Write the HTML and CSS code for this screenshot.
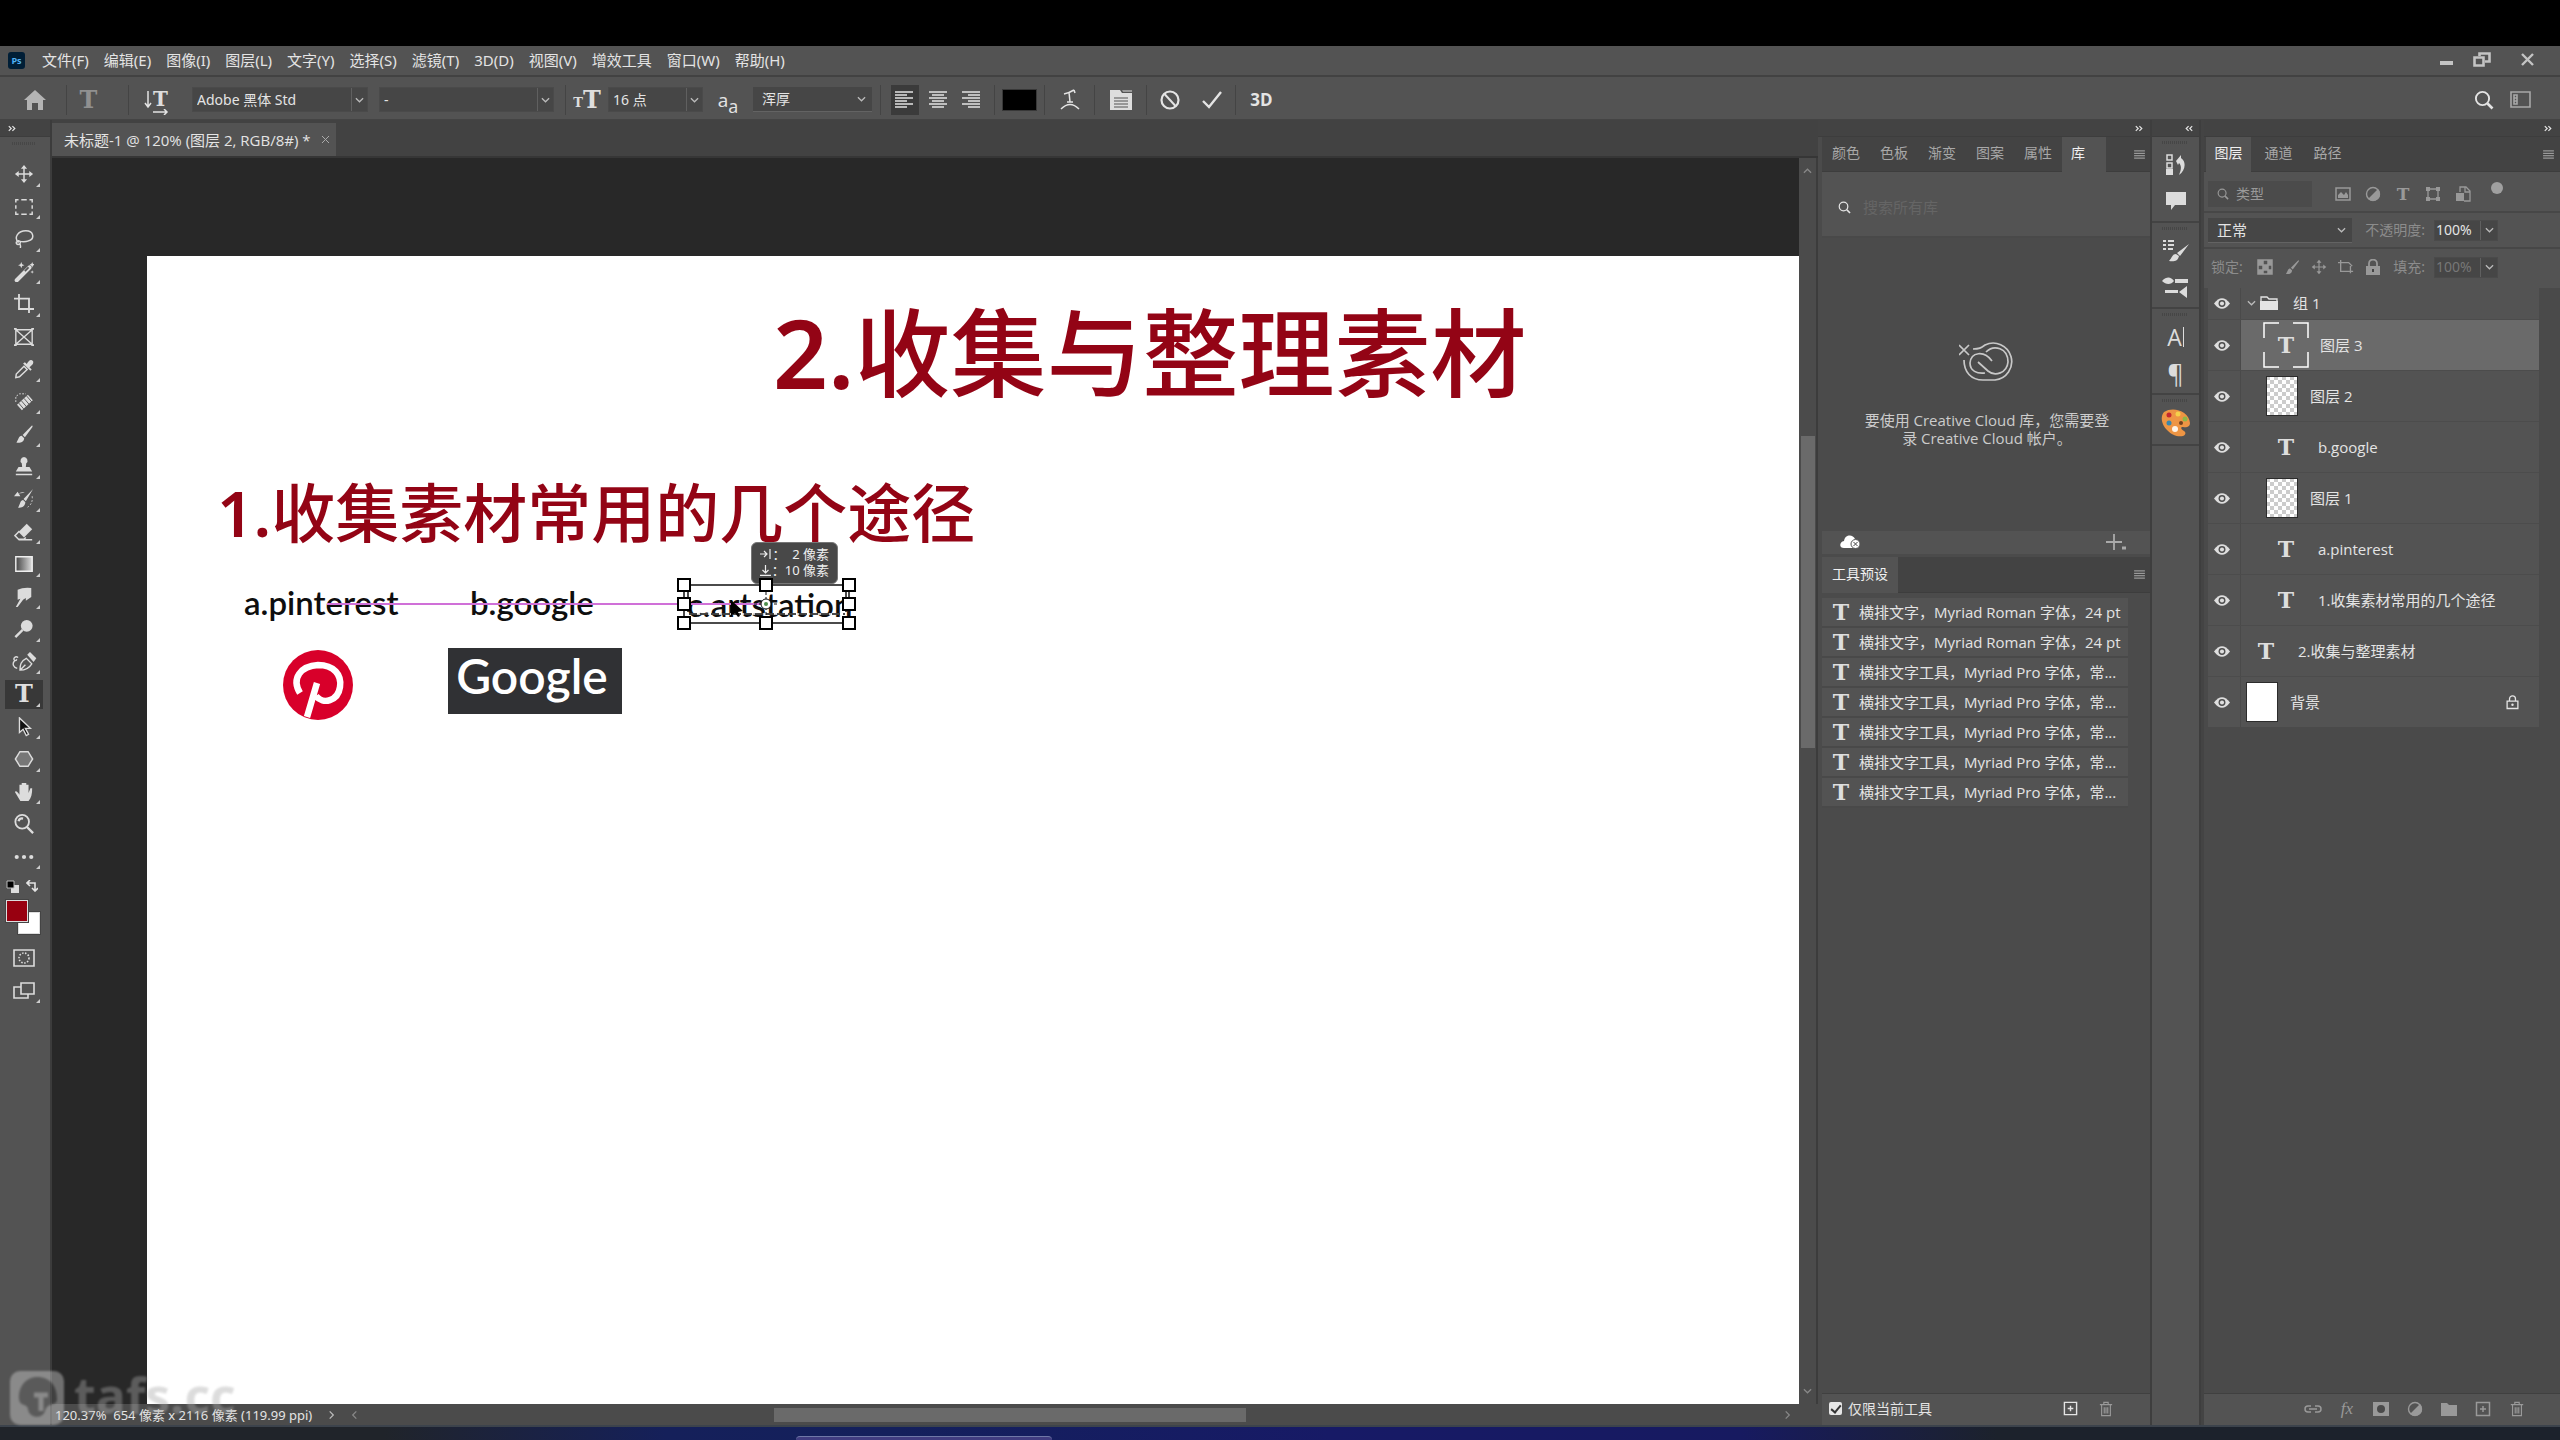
FILE: index.html
```html
<!DOCTYPE html>
<html lang="zh-CN">
<head>
<meta charset="utf-8">
<title>未标题-1 @ 120%</title>
<link rel="stylesheet" href="styles.css">
</head>
<body>
<svg class="defs" aria-hidden="true">
  <symbol id="chev" viewBox="0 0 10 6"><path d="M1 1l4 4 4-4" fill="none" stroke="currentColor" stroke-width="1.4"/></symbol>
  <symbol id="menu" viewBox="0 0 12 10"><path d="M0 1h12M0 3.7h12M0 6.4h12M0 9h12" stroke="currentColor"/></symbol>
  <symbol id="search" viewBox="0 0 20 20"><path d="M13.5 13.5l5 5" stroke="currentColor" stroke-width="2.6"/><circle cx="8.5" cy="8.5" r="6.6" fill="none" stroke="currentColor" stroke-width="1.9"/></symbol>
  <symbol id="move" viewBox="0 0 22 22"><path d="M11 4v14M4 11h14" stroke="currentColor" stroke-width="1.6"/><path d="M11 1l3.4 4.2H7.600zM11 21l3.400-4.200H7.600zM1 11l4.200-3.400v6.800zM21 11l-4.200-3.400v6.800z" fill="currentColor"/></symbol>
  <symbol id="brush" viewBox="0 0 22 22"><path d="M20 1.500L9.500 12l2.500 2.500L20.500 3z" fill="currentColor"/><path d="M8.500 13c-3 0-3 3-5.800 7.500 4 .5 8 0 8.500-4.800z" fill="currentColor"/></symbol>
  <symbol id="eye" viewBox="0 0 18 12"><path d="M0 6q9-12 18 0q-9 12-18 0z" fill="currentColor"/><circle cx="9" cy="6" r="3.900" fill="#4d4d4d"/><circle cx="9" cy="6" r="2.300" fill="currentColor"/></symbol>
  <symbol id="trash" viewBox="0 0 16 18"><path d="M1 4h14M5.500 4V1.500h5V4M3 4v12.500h10V4M6 7v7M8 7v7M10 7v7" fill="none" stroke="currentColor" stroke-width="1.300"/></symbol>
  <symbol id="plusbox" viewBox="0 0 16 16"><path d="M1.500 1.500h13v13h-13zM8 5v6M5 8h6" fill="none" stroke="currentColor" stroke-width="1.500"/></symbol>
  <symbol id="half" viewBox="0 0 16 16"><circle cx="8" cy="8" r="6.500" fill="none" stroke="currentColor" stroke-width="1.400"/><path d="M13 3A7 7 0 0 1 3 13z" fill="currentColor"/></symbol>
  <symbol id="lock" viewBox="0 0 14 16"><path d="M1.200 7h11.600v8H1.200zM3.800 7V4.500a3.200 3.200 0 0 1 6.400 0V7" fill="none" stroke="currentColor" stroke-width="1.400"/><circle cx="7" cy="11" r="1.300" fill="currentColor"/></symbol>
  <symbol id="dbl" viewBox="0 0 10 8"><path d="M1 1l3 3-3 3M5.500 1l3 3-3 3" fill="none" stroke="currentColor" stroke-width="1.500"/></symbol>
  <pattern id="checks" width="8" height="8" patternUnits="userSpaceOnUse"><path d="M0 0h8v8H0z" fill="#fff"/><path d="M0 0h4v4H0zM4 4h4v4H4z" fill="#ccc"/></pattern>
  <symbol id="clear" viewBox="0 0 32 40"><path d="M0 0h32v40H0z" fill="#2c2c2c"/><path d="M1 1h30v38H1z" fill="url(#checks)"/></symbol>
</svg>

<div class="app">
  <div class="topgap"></div>

  <header class="menubar">
    <span class="ps">Ps</span>
    <nav class="menus">
      <button>文件(F)</button><button>编辑(E)</button><button>图像(I)</button><button>图层(L)</button><button>文字(Y)</button><button>选择(S)</button><button>滤镜(T)</button><button>3D(D)</button><button>视图(V)</button><button>增效工具</button><button>窗口(W)</button><button>帮助(H)</button>
    </nav>
    <div class="winbtns">
      <button aria-label="最小化"><svg width="14" height="18" viewBox="0 0 14 18"><path d="M0 10h13v4H0z" fill="currentColor"/></svg></button>
      <button aria-label="还原"><svg width="18" height="16" viewBox="0 0 18 16"><path d="M6.500 4V1.500h10v8H12M1.500 5.500h9v8h-9z" fill="none" stroke="currentColor" stroke-width="2.600"/></svg></button>
      <button aria-label="关闭"><svg width="13" height="13" viewBox="0 0 13 13"><path d="M1 1l11 11M12 1L1 12" stroke="currentColor" stroke-width="2.400"/></svg></button>
    </div>
  </header>

  <div class="options">
    <button class="cell w66" aria-label="主页"><svg width="22" height="20" viewBox="0 0 22 20"><path d="M11 0l11 10h-3v10h-5v-7H8v7H3V10H0z" fill="#b4b4b4"/></svg></button>
    <span class="cell bar w62"><span class="T dim big">T</span></span>
    <button class="cell bar w56" aria-label="切换文本取向"><svg width="8" height="20" viewBox="0 0 8 20"><path d="M4 1v15M1 13l3 4 3-4" fill="none" stroke="currentColor" stroke-width="1.500"/></svg><span class="under"><span class="T">T</span><svg width="16" height="6" viewBox="0 0 16 6"><path d="M0 3h14M11 0l3 3-3 3" fill="none" stroke="currentColor" stroke-width="1.500"/></svg></span></button>
    <div class="combo w176"><input aria-label="字体" value="Adobe 黑体 Std"><button aria-label="选择字体"><svg class="chev"><use href="#chev"/></svg></button></div>
    <div class="combo w175 ml"><input aria-label="字体样式" value="-"><button aria-label="选择样式"><svg class="chev"><use href="#chev"/></svg></button></div>
    <span class="cell bar w43 ml"><span class="T sm">T</span><span class="T big">T</span></span>
    <div class="combo w95"><input aria-label="字号" value="16 点"><button aria-label="选择字号"><svg class="chev"><use href="#chev"/></svg></button></div>
    <span class="cell w50 aa">a<sub>a</sub></span>
    <div class="drop w119"><select aria-label="消除锯齿"><option>浑厚</option></select><svg class="chev"><use href="#chev"/></svg></div>
    <div class="cell bar w114 aligns">
      <button class="on" aria-label="左对齐"><svg width="20" height="18" viewBox="0 0 20 18"><path d="M0 1h18M0 4h12M0 7h18M0 10h12M0 13h18M0 16h12" stroke="currentColor" stroke-width="1.600"/></svg></button>
      <button aria-label="居中"><svg width="20" height="18" viewBox="0 0 20 18"><path d="M1 1h18M4 4h12M1 7h18M4 10h12M1 13h18M4 16h12" stroke="currentColor" stroke-width="1.600"/></svg></button>
      <button aria-label="右对齐"><svg width="20" height="18" viewBox="0 0 20 18"><path d="M1 1h18M7 4h12M1 7h18M7 10h12M1 13h18M7 16h12" stroke="currentColor" stroke-width="1.600"/></svg></button>
    </div>
    <button class="cell bar w50" aria-label="文本颜色"><span class="black"></span></button>
    <button class="cell bar w50" aria-label="变形文字"><svg width="22" height="22" viewBox="0 0 22 22"><path d="M5 5q5-1 10-4M10 3l1 10M8 13h6M2 20q9-9 18 0M15 1l1 3" fill="none" stroke="currentColor" stroke-width="1.500"/></svg></button>
    <button class="cell bar w52" aria-label="字符面板"><svg width="22" height="22" viewBox="0 0 22 22"><path d="M0 1h10l2 3h10v17H0z" fill="#ddd"/><path d="M12 1h10v2H13z" fill="#999"/><path d="M4 9h14M4 12h14M4 15h14M4 18h14" stroke="#555" stroke-width="1.200"/></svg></button>
    <div class="cell bar w89 pair">
      <button aria-label="取消"><svg width="20" height="20" viewBox="0 0 20 20"><path d="M4.500 4l11 12" stroke="currentColor" stroke-width="2"/><circle cx="10" cy="10" r="8.500" fill="none" stroke="currentColor" stroke-width="2.200"/></svg></button>
      <button aria-label="提交"><svg width="20" height="18" viewBox="0 0 20 18"><path d="M1 10l6 6L19 1" fill="none" stroke="currentColor" stroke-width="2.400"/></svg></button>
    </div>
    <button class="cell bar w56 d3">3D</button>
    <div class="optright">
      <button aria-label="搜索"><svg width="20" height="20"><use href="#search"/></svg></button>
      <button aria-label="工作区"><svg width="21" height="17" viewBox="0 0 21 17"><path d="M1 1h19v15H1zM4 4h3v9H4zM4 7h3M4 10h3" fill="none" stroke="#a8a8a8" stroke-width="1.600"/></svg></button>
    </div>
  </div>

  <main class="work">
    <aside class="tools">
      <div class="strip"><svg class="dbl"><use href="#dbl"/></svg></div>
      <div class="grip"></div>
      <div class="toollist">
        <button class="more" aria-label="移动"><svg><use href="#move"/></svg></button>
        <button class="more" aria-label="矩形选框"><svg viewBox="0 0 22 22"><path d="M2 6V3h3M8 3h6M17 3h3v3M20 9v4M20 16v3h-3M14 19H8M5 19H2v-3M2 13V9" fill="none" stroke="currentColor" stroke-width="1.600"/></svg></button>
        <button class="more" aria-label="套索"><svg viewBox="0 0 22 22"><path d="M5 15C-1 9 5 2 13 2c9 0 10 9 3 11-4 1.500-8 1-11 0-3-.5-3.500 4-.5 4 3.500 0 3-4.500 0-4M6 16c2 2 1 4 1 5" fill="none" stroke="currentColor" stroke-width="1.600"/></svg></button>
        <button class="more" aria-label="魔棒"><svg viewBox="0 0 22 22"><path d="M3 20L17 6" stroke="currentColor" stroke-width="4.500" stroke-linecap="round"/><path d="M12 10l4-4" stroke="#535353" stroke-width="2"/><path d="M8 0l1 2.500L11.500 3.500 9 4.500 8 7 7 4.500 4.500 3.500 7 2.500zM20 0l.8 2 2 1-2 1-.8 2-.8-2-2-1 2-1zM20 9l.5 1.500 1.500.5-1.500.5-.5 1.500-.5-1.500-1.500-.5 1.500-.5z" fill="currentColor"/></svg></button>
        <button class="more" aria-label="裁剪"><svg viewBox="0 0 22 22"><path d="M0 5h16.500v16M5.500 0v16.500H22" fill="none" stroke="currentColor" stroke-width="2"/></svg></button>
        <button aria-label="图框"><svg viewBox="0 0 22 22"><path d="M2 3h18v16H2zM2 3l18 16M20 3L2 19" fill="none" stroke="currentColor" stroke-width="1.500"/><path d="M0 2h3M19 2h3M0 20h3M19 20h3" stroke="currentColor" stroke-width="2"/></svg></button>
        <button class="more" aria-label="吸管"><svg viewBox="0 0 22 22"><path d="M11 8l3.500 3.500L6 19.500l-4 1 .5-4z" fill="none" stroke="currentColor" stroke-width="1.600"/><path d="M10 5l8 8 1.500-1.500L17 9c2-2 5-3 4-6.500C18.500-.5 16 2 14 5.500L12 3.500z" fill="currentColor"/></svg></button>
        <button class="more" aria-label="修复画笔"><svg viewBox="0 0 22 22"><path d="M2 11V5l4-3h7" fill="none" stroke="currentColor" stroke-width="1" stroke-dasharray="2 1.500"/><path d="M6 17L18 6" stroke="currentColor" stroke-width="8"/><path d="M5 12l6 7M8 9.500l6 7M11 7l6 7M14 4.500l6 7" stroke="#535353" stroke-width="1"/></svg></button>
        <button class="more" aria-label="画笔"><svg><use href="#brush"/></svg></button>
        <button class="more" aria-label="仿制图章"><svg viewBox="0 0 22 22"><path d="M11 0a4 4 0 0 1 2.500 7L13 11h4l3 5H2l3-5h4L8.500 7A4 4 0 0 1 11 0zM2 18.500h18V20H2z" fill="currentColor"/></svg></button>
        <button class="more" aria-label="历史记录画笔"><svg viewBox="0 0 22 22"><path d="M21 0L10.500 11l2.500 2.500zM10 12c-3 0-3 4-5.500 8.500 4 0 7.500-1 8-6z" fill="currentColor"/><path d="M0 8l4-5 3 5zM5 5q4-2 7-1" fill="currentColor"/><path d="M20 8q1 8-5 12" fill="none" stroke="currentColor" stroke-dasharray="2 2"/></svg></button>
        <button class="more" aria-label="橡皮擦"><svg viewBox="0 0 22 22"><path d="M14 2l6 6-9 9-6-6z" fill="currentColor"/><path d="M6 10l-5 5 4 4h6l2-2M5 19.500h15" fill="none" stroke="currentColor" stroke-width="1.600"/></svg></button>
        <button class="more" aria-label="渐变"><svg viewBox="0 0 22 22"><linearGradient id="g"><stop stop-color="#444"/><stop offset="1" stop-color="#ddd"/></linearGradient><path d="M2 3h18v16H2z" fill="url(#g)" stroke="#eee" stroke-width="1.600"/></svg></button>
        <button class="more" aria-label="涂抹"><svg viewBox="0 0 22 22"><path d="M4 3q6-3 15-2v10l-6 4v-3l-3 2-6 8H2l5-9-3 1z" fill="currentColor"/></svg></button>
        <button class="more" aria-label="减淡"><svg viewBox="0 0 22 22"><circle cx="14" cy="7.500" r="6.500" fill="currentColor"/><path d="M1.500 20l8-8" stroke="currentColor" stroke-width="2.600"/></svg></button>
        <button class="more" aria-label="钢笔"><svg class="wide" viewBox="0 0 26 22"><path d="M8 20c0-6 1-10 7-13l6 6c-3 5-7 7-13 7zl6-6" fill="none" stroke="currentColor" stroke-width="1.500"/><path d="M16 3l3-3 7 7-3 4z" fill="currentColor"/><path d="M6 6c-3-2-6 1-4 3 1 1 3 0 2-1M2 10c-3 3-1 7 3 8" fill="none" stroke="currentColor" stroke-width="1.500"/></svg></button>
        <button class="more on" aria-label="文字"><span class="T big">T</span></button>
        <button class="more" aria-label="路径选择"><svg viewBox="0 0 22 22"><path d="M6 1v16l4-3.500 3.500 7 2.500-1.500-3.500-6.500H18z" fill="#111" stroke="#ddd" stroke-width="1.500"/></svg></button>
        <button class="more" aria-label="多边形"><svg viewBox="0 0 22 22"><path d="M6.500 3h9l5 8-5 8h-9l-5-8z" fill="#777" stroke="currentColor" stroke-width="1.600"/></svg></button>
        <button class="more" aria-label="抓手"><svg viewBox="0 0 22 22"><path d="M7 21L1 11c1-2 3 0 5 3V3h2.500v8V1H11v10V1h2.500v10V3H16v9l2-5h2c0 6-1 11-4 14z" fill="currentColor"/></svg></button>
        <button aria-label="缩放"><svg viewBox="0 0 22 22"><circle cx="9" cy="8.500" r="7.500" fill="none" stroke="currentColor" stroke-width="2"/><path d="M5 8q1-4 5-3M14 14l7 7" fill="none" stroke="currentColor" stroke-width="2.600"/></svg></button>
        <button class="more" aria-label="编辑工具栏"><svg viewBox="0 0 22 22"><circle cx="3" cy="11" r="2.300" fill="currentColor"/><circle cx="11" cy="11" r="2.300" fill="currentColor"/><circle cx="19" cy="11" r="2.300" fill="currentColor"/></svg></button>
      </div>
      <div class="mini">
        <button aria-label="默认颜色"><svg width="13" height="13" viewBox="0 0 13 13"><path d="M5 5h8v8H5z" fill="#ddd"/><path d="M1 1h7v7H1z" fill="#000" stroke="#bbb"/></svg></button>
        <button aria-label="切换颜色"><svg width="12" height="12" viewBox="0 0 12 12"><path d="M2 3h7v7M4 0L1 3l3 3M6 8l3 3 3-3" fill="none" stroke="currentColor" stroke-width="1.600"/></svg></button>
      </div>
      <div class="colors"><button class="bg" aria-label="背景色"></button><button class="fg" aria-label="前景色"></button></div>
      <div class="modes">
        <button aria-label="快速蒙版"><svg viewBox="0 0 22 18"><path d="M1 1h20v16H1z" fill="none" stroke="currentColor" stroke-width="1.600"/><circle cx="11" cy="9" r="5" fill="none" stroke="currentColor" stroke-width="1.600" stroke-dasharray="1.500 1.500"/></svg></button>
        <button class="more" aria-label="屏幕模式"><svg viewBox="0 0 22 18"><path d="M8 1h13v11H8zM8 5H1v11h14v-4" fill="none" stroke="currentColor" stroke-width="1.600"/></svg></button>
      </div>
    </aside>

    <section class="doc">
      <div class="tabbar"><button class="doctab">未标题-1 @ 120% (图层 2, RGB/8#) *<svg width="9" height="9" viewBox="0 0 9 9"><path d="M1 1l7 7M8 1L1 8" stroke="#aaa"/></svg></button></div>
      <div class="view">
        <div class="paste">
          <div class="canvas">
            <h1 class="art title"><b>2.</b>收集与整理素材</h1>
            <h2 class="art sub"><b>1.</b>收集素材常用的几个途径</h2>
            <span class="art lab pin">a.pinterest</span>
            <span class="art lab goo">b.google</span>
            <span class="art lab sta">c.artstation</span>
            <svg class="art pinlogo" viewBox="0 0 70 70"><circle cx="35" cy="35" r="35" fill="#d8002a"/><path d="M24 67l10-34M17 43C8 28 18 16 35 15c16 0 24 10 22 22-2 14-17 18-24 9" fill="none" stroke="#fff" stroke-width="6.500"/></svg>
            <span class="art glogo">Google</span>
            <div class="art tip"><span><svg width="11" height="10" viewBox="0 0 11 10"><path d="M0 5h7M4 2l3 3-3 3M10 0v10" fill="none" stroke="currentColor" stroke-width="1.200"/></svg>：&nbsp; 2 像素</span><span><svg width="11" height="11" viewBox="0 0 11 11"><path d="M5.500 0v8M2.500 5l3 3 3-3M0 10.300h11" fill="none" stroke="currentColor" stroke-width="1.200"/></svg>：10 像素</span></div>
            <svg class="art frame" viewBox="0 0 550 60"><path d="M0 26h440" stroke="#d070d8" stroke-width="2"/><g fill="none" stroke="#111" stroke-width="1.500"><path d="M357 7h165v38H357z"/><path d="M362 36h156" stroke="#fff"/><path d="M362 36h156" stroke-dasharray="8 3"/><path d="M361 14v20M519 14v20" stroke-dasharray="5 3"/></g><g fill="#fff" stroke="#000" stroke-width="2"><path d="M351 1h12v12h-12zM433 1h12v12h-12zM516 1h12v12h-12zM351 20h12v12h-12zM516 20h12v12h-12zM351 39h12v12h-12zM433 39h12v12h-12zM516 39h12v12h-12z"/></g><path d="M439 14v24M427 26h24" stroke="#111" stroke-dasharray="3 2"/><circle cx="439" cy="26" r="5" fill="#fff" stroke="#111"/><circle cx="439" cy="26" r="2" fill="#4c8f4c"/><path d="M404 22v16l4-3 3 4 2-1-2-4 5-1z" fill="#000"/></svg>
          </div>
        </div>
        <div class="vscroll"><svg class="chev up dimc"><use href="#chev"/></svg><div class="vtrack"><i></i></div><svg class="chev dimc"><use href="#chev"/></svg></div>
      </div>
      <div class="status"><span class="info">120.37%&nbsp; 654 像素 x 2116 像素 (119.99 ppi)</span><svg class="chev rt"><use href="#chev"/></svg><svg class="chev lf dimc"><use href="#chev"/></svg><div class="htrack"><i></i></div><svg class="chev rt dimc"><use href="#chev"/></svg></div>
    </section>

    <section class="panels">
      <div class="strip end"><svg class="dbl"><use href="#dbl"/></svg></div>
      <div class="tabs"><button>颜色</button><button>色板</button><button>渐变</button><button>图案</button><button>属性</button><button class="on lib">库</button><svg class="menu"><use href="#menu"/></svg></div>
      <label class="libsearch"><svg width="13" height="13"><use href="#search"/></svg><input placeholder="搜索所有库" aria-label="搜索所有库"></label>
      <div class="cc">
        <svg width="56" height="40" viewBox="0 0 56 40" fill="none" stroke="#c8c8c8" stroke-width="1.700"><path d="M0 4l10 10M10 4L0 14"/><path d="M14 8c6 0 8-1 12-4a18.500 18.500 0 1 1 10 35H24C12 39 5 31 5 19"/><path d="M33 20c-8-11-21-9-22 2 0 8 7 11 15 10M19 21l10 9c7 6 19 2 20-9 0-14-14-18-22-10"/></svg>
        <p>要使用 Creative Cloud 库，您需要登<br>录 Creative Cloud 帐户。</p>
      </div>
      <div class="libfoot"><svg width="21" height="14" viewBox="0 0 21 14"><path d="M4 13C-1 13-1 7 4 6 5-1 13-1 15 4c2 1 3 2 3 3v6z" fill="#fff"/><circle cx="15.500" cy="9" r="4.500" fill="#fff" stroke="#535353"/><path d="M13.500 7l4 4M17.500 7l-4 4" stroke="#444"/></svg><svg width="20" height="16" viewBox="0 0 20 16"><path d="M8 0v16M0 8h16" stroke="#aaa" stroke-width="1.800"/><path d="M16 14h4" stroke="#aaa" stroke-width="3"/></svg></div>
      <div class="tabs second"><button class="on">工具预设</button><svg class="menu"><use href="#menu"/></svg></div>
      <ul class="presets">
        <li><span class="T">T</span>横排文字，Myriad Roman 字体，24 pt</li>
        <li><span class="T">T</span>横排文字，Myriad Roman 字体，24 pt</li>
        <li><span class="T">T</span>横排文字工具，Myriad Pro 字体，常...</li>
        <li><span class="T">T</span>横排文字工具，Myriad Pro 字体，常...</li>
        <li><span class="T">T</span>横排文字工具，Myriad Pro 字体，常...</li>
        <li><span class="T">T</span>横排文字工具，Myriad Pro 字体，常...</li>
        <li><span class="T">T</span>横排文字工具，Myriad Pro 字体，常...</li>
      </ul>
      <div class="foot"><label class="chk"><input type="checkbox" checked>仅限当前工具</label><button aria-label="新建"><svg width="15" height="15"><use href="#plusbox"/></svg></button><button class="fade" aria-label="删除"><svg width="14" height="16"><use href="#trash"/></svg></button></div>
    </section>

    <aside class="dock">
      <div class="strip end"><svg class="dbl flip"><use href="#dbl"/></svg></div>
      <div class="dgroup">
        <button aria-label="历史记录"><svg width="20" height="22" viewBox="0 0 20 22"><path d="M1 1h5v5H1zM1 9h5v5H1z" fill="none" stroke="currentColor" stroke-width="1.500"/><path d="M0 15h7v6H0zM10 7l5-6v3c6 4 4 13-2 17 2-5 3-9 0-12l-1 2z" fill="currentColor"/></svg></button>
        <button aria-label="注释"><svg width="20" height="20" viewBox="0 0 20 20"><path d="M0 1h20v13H9l-4 5v-5H0z" fill="currentColor"/></svg></button>
      </div>
      <div class="dgroup">
        <button aria-label="画笔设置"><svg width="28" height="24" viewBox="0 0 28 24"><path d="M1 2h3M6 2h6M1 6h3M6 6h6M1 10h3M6 10h5" stroke="currentColor" stroke-width="2"/><path d="M27 5L15 14l3 3zM14 15c-4 0-4 4-7 7 5 1 9 0 10-5z" fill="currentColor"/></svg></button>
        <button aria-label="画笔"><svg width="28" height="22" viewBox="0 0 28 22"><path d="M0 5c5-5 9-4 12 0-3 4-8 4-12 0zM13 3h13v4H13zM3 14h13v3H3zM17 16l8-6v12z" fill="currentColor"/></svg></button>
      </div>
      <div class="dgroup">
        <button class="char">A<i></i></button>
        <button class="para">¶</button>
      </div>
      <div class="dgroup one">
        <button aria-label="调色盘"><svg width="30" height="28" viewBox="0 0 30 28"><path d="M3 3C12-3 28 2 29 14c0 4-4 5-7 4-3 0-2 2 1 4 2 1 2 4-1 5C10 30-5 13 3 3z" fill="#ee9544"/><circle cx="8" cy="6" r="2.500" fill="#c4272f"/><circle cx="17" cy="5" r="2.500" fill="#f5d04a"/><circle cx="24" cy="10" r="2.500" fill="#8eb748"/><circle cx="8" cy="14" r="2.500" fill="#3a87ad"/><circle cx="20" cy="14" r="2" fill="#704020"/><circle cx="14" cy="20" r="3" fill="#fff4e8"/></svg></button>
      </div>
    </aside>

    <section class="layers">
      <div class="strip end far"><svg class="dbl"><use href="#dbl"/></svg></div>
      <div class="tabs"><button class="on">图层</button><button>通道</button><button>路径</button><svg class="menu"><use href="#menu"/></svg></div>
      <div class="filter">
        <label class="ftype"><svg width="12" height="12"><use href="#search"/></svg><input aria-label="类型" value="类型"></label>
        <div class="ficons">
          <svg viewBox="0 0 16 14"><path d="M1 1h14v12H1z" fill="none" stroke="currentColor" stroke-width="1.500"/><path d="M3 11V8l3-3 3 3 2-3 2 3v3z" fill="currentColor"/></svg>
          <svg><use href="#half"/></svg>
          <span class="T sm2">T</span>
          <svg viewBox="0 0 16 16"><path d="M3 3h10v10H3z" fill="none" stroke="currentColor" stroke-width="1.300"/><path d="M1 1h4v4H1zM11 1h4v4h-4zM1 11h4v4H1zM11 11h4v4h-4z" fill="currentColor"/></svg>
          <svg viewBox="0 0 16 16"><path d="M5 6V1h6l4 4v10H9M10 1v5h5" fill="none" stroke="currentColor" stroke-width="1.300"/><path d="M1 7h8v8H1z" fill="currentColor"/></svg>
        </div>
        <i class="dot"></i>
      </div>
      <div class="blend">
        <div class="drop"><select aria-label="混合模式"><option>正常</option></select><svg class="chev"><use href="#chev"/></svg></div>
        <label for="op">不透明度:</label>
        <div class="combo num"><input id="op" value="100%"><button aria-label="调整不透明度"><svg class="chev"><use href="#chev"/></svg></button></div>
      </div>
      <div class="blend locks">
        <span class="lk">锁定:</span>
        <div class="ficons">
          <svg viewBox="0 0 16 16"><path d="M1 1h14v14H1zM6 1v14M11 1v14M1 6h14M1 11h14" fill="none" stroke="currentColor" stroke-width="1.500"/><path d="M1 1h5v5H1zM11 1h4v5h-4zM6 6h5v5H6zM1 11h5v4H1zM11 11h4v4h-4z" fill="currentColor"/></svg>
          <svg><use href="#brush"/></svg>
          <svg><use href="#move"/></svg>
          <svg viewBox="0 0 18 16"><path d="M0 3h12l4 4M3 0v13h14M14 7v8" fill="none" stroke="currentColor" stroke-width="1.500"/></svg>
          <svg viewBox="0 0 14 16"><path d="M0 7h14v9H0z" fill="currentColor"/><path d="M3 7V4.500a4 4 0 0 1 8 0V7" fill="none" stroke="currentColor" stroke-width="1.800"/><path d="M7 10v3" stroke="#444" stroke-width="2"/></svg>
        </div>
        <label for="fl">填充:</label>
        <div class="combo num off"><input id="fl" value="100%"><button aria-label="调整填充"><svg class="chev"><use href="#chev"/></svg></button></div>
      </div>
      <div class="listwrap">
        <ul class="list">
          <li class="grp"><svg class="eye"><use href="#eye"/></svg><div class="row"><svg class="chev"><use href="#chev"/></svg><svg class="folder" viewBox="0 0 18 14"><path d="M1 13V1h6l2 2h8v10z" fill="none" stroke="currentColor" stroke-width="1.300"/><path d="M0 5h18v9H0z" fill="currentColor"/></svg>组 1</div></li>
          <li><svg class="eye"><use href="#eye"/></svg><div class="row sel"><span class="brk"><svg viewBox="0 0 46 46"><path d="M1 16V1h15M30 1h15v15M45 30v15H30M16 45H1V30" fill="none" stroke="#fff" stroke-width="1.500"/></svg><span class="T">T</span></span>图层 3</div></li>
          <li><svg class="eye"><use href="#eye"/></svg><div class="row pix"><svg class="thumb"><use href="#clear"/></svg>图层 2</div></li>
          <li><svg class="eye"><use href="#eye"/></svg><div class="row txt"><span class="T">T</span>b.google</div></li>
          <li><svg class="eye"><use href="#eye"/></svg><div class="row pix"><svg class="thumb"><use href="#clear"/></svg>图层 1</div></li>
          <li><svg class="eye"><use href="#eye"/></svg><div class="row txt"><span class="T">T</span>a.pinterest</div></li>
          <li><svg class="eye"><use href="#eye"/></svg><div class="row txt"><span class="T">T</span>1.收集素材常用的几个途径</div></li>
          <li><svg class="eye"><use href="#eye"/></svg><div class="row txt root"><span class="T">T</span>2.收集与整理素材</div></li>
          <li><svg class="eye"><use href="#eye"/></svg><div class="row pix base"><span class="thumb white"></span>背景<svg class="lck"><use href="#lock"/></svg></div></li>
        </ul>
      </div>
      <div class="foot lay">
        <button aria-label="链接"><svg viewBox="0 0 18 10"><path d="M7 8H4a3 3 0 0 1 0-6h3M11 2h3a3 3 0 0 1 0 6h-3M5 5h8" fill="none" stroke="currentColor" stroke-width="1.500"/></svg></button>
        <button class="fx">fx</button>
        <button aria-label="蒙版"><svg viewBox="0 0 16 16"><path d="M0 1h16v14H0z" fill="currentColor"/><circle cx="8" cy="8" r="4" fill="#4a4a4a"/></svg></button>
        <button aria-label="调整"><svg><use href="#half"/></svg></button>
        <button aria-label="组"><svg viewBox="0 0 16 16"><path d="M0 2h6l2 2h8v11H0z" fill="currentColor"/></svg></button>
        <button aria-label="新建图层"><svg><use href="#plusbox"/></svg></button>
        <button aria-label="删除图层"><svg><use href="#trash"/></svg></button>
      </div>
    </section>
  </main>
  <footer class="taskbar"><i></i></footer>

  <div class="mark"><svg width="54" height="54" viewBox="0 0 54 54"><rect width="54" height="54" rx="10" fill="#ddd"/><path d="M27 6c14 0 20 10 20 22 0 8-9 2-12 12-2 8-16 8-17-2-1-6-8-2-9-10C8 16 16 6 27 6z" fill="#666"/><path d="M24 24h14M31 24v16" stroke="#ddd" stroke-width="5"/></svg><span>tafs.cc</span></div>
</div>
</body>
</html>
```
FILE: styles.css
```css
* { box-sizing: border-box; }
body { margin: 0; background: #000; color: #e4e4e4; font: 14px/20px "Noto Sans", "Noto Sans CJK SC", sans-serif; }
button { border: 0; padding: 0; margin: 0; background: none; color: inherit; font: inherit; display: flex; align-items: center; justify-content: center; white-space: nowrap; }
input, select { font: inherit; color: inherit; background: none; border: 0; padding: 0; margin: 0; min-width: 0; outline: 0; }
select { appearance: none; }
ul { list-style: none; margin: 0; padding: 0; }
svg { display: block; flex: none; }
.defs { position: absolute; width: 0; height: 0; }
.app { position: relative; min-height: 100vh; display: flex; flex-direction: column; }
.topgap { height: 46px; }
.T { width: 18px; display: flex; justify-content: center; font: 700 22px/24px "DejaVu Serif", serif; color: #dedede; }
.T.big { font-size: 24px; }
.T.dim { color: #909090; }
.T.sm { width: 10px; font-size: 13px; padding-top: 7px; }
.chev { width: 9px; height: 6px; color: #bbb; }
.up { transform: rotate(180deg); }
.rt { transform: rotate(-90deg); }
.lf { transform: rotate(90deg); }
.dimc { color: #888; }

.menubar { height: 31px; background: #535353; border-bottom: 2px solid #424242; display: flex; align-items: center; padding-left: 8px; }
.ps { width: 17px; height: 17px; border-radius: 3px; background: #001e36; color: #4fb0f5; font: 700 9px/17px "Open Sans", sans-serif; text-align: center; }
.menus { display: flex; gap: 15px; padding: 0 0 2px 17px; font-size: 15px; }
.winbtns { margin-left: auto; display: flex; align-items: center; color: #c4c4c4; padding: 0 26px 2px 0; gap: 19px; }
.winbtns button:last-child { margin-left: 11px; }

.options { height: 43px; background: #535353; display: flex; align-items: center; border-bottom: 1px solid #444; padding-top: 3px; }
.cell { height: 30px; display: flex; align-items: center; justify-content: center; flex: none; }
.bar { border-left: 1px solid #444; }
.w43 { width: 43px; } .w50 { width: 50px; } .w52 { width: 52px; } .w56 { width: 56px; } .w62 { width: 62px; } .w66 { width: 66px; }
.w89 { width: 89px; } .w95 { width: 95px; } .w114 { width: 114px; } .w119 { width: 119px; } .w175 { width: 175px; } .w176 { width: 176px; }
.ml { margin-left: 11px; }
.w176 { margin-left: 8px; }
.w66 { padding-left: 4px; }
.w62 { padding-right: 18px; }
.under { display: flex; flex-direction: column; align-items: center; padding-top: 4px; }
.under .T { line-height: 20px; font-size: 20px; }
.combo { height: 25px; background: #464646; display: flex; border: 1px solid #4a4a4a; }
.combo input { flex: 1; padding-left: 4px; }
.combo button { width: 16px; border-left: 1px solid #606060; }
.drop { position: relative; height: 25px; background: #464646; display: flex; align-items: center; border-bottom: 1px solid #636363; padding-right: 6px; }
.drop select { flex: 1; height: 25px; padding-left: 9px; }
.aa { font: 19px/20px "Open Sans", sans-serif; }
.aa sub { font-size: 18px; line-height: 10px; padding-top: 12px; }
.aligns { justify-content: flex-start; gap: 5px; padding-left: 10px; margin-left: 8px; }
.aligns button { width: 28px; height: 30px; }
.aligns .on { background: #3b3b3b; }
.black { width: 35px; height: 22px; background: #000; border: 1px solid #383838; }
.pair { gap: 22px; }
.d3 { font: 700 17px/20px "Open Sans", sans-serif; padding-right: 4px; }
.optright { margin-left: auto; display: flex; gap: 16px; padding-right: 29px; }

.work { flex: 1; display: grid; grid-template-columns: 52px minmax(0, 1fr) 334px 49px 359px; background: #535353; }
.strip { height: 17px; background: #434343; border-bottom: 1px solid #3d3d3d; display: flex; align-items: center; padding: 0 8px; flex: none; }
.strip.end { justify-content: flex-end; }
.dbl { width: 8px; height: 7px; }
.flip { transform: scaleX(-1); }
.panels .strip { padding-right: 7px; }
.dock .strip { padding-right: 6px; }

.tools { border-right: 2px solid #3c3c3c; }
.grip { height: 21px; background: repeating-linear-gradient(90deg, #474747 0 1px, #535353 1px 2px) 12px 5px / 24px 3px no-repeat; }
.toollist { height: 715px; display: flex; flex-direction: column; padding-left: 5px; }
.toollist button, .modes button { position: relative; flex: 1; width: 38px; color: #dcdcdc; background-clip: content-box; padding: 2px 0; }
.toollist button svg { width: 20px; height: 20px; }
.toollist button .wide { width: 25px; height: 20px; }
.toollist .on { background-color: #383838; }
.more::after { content: ""; position: absolute; right: 3px; bottom: 4px; border: 2px solid; border-color: transparent #ccc #ccc transparent; }
.mini { display: flex; justify-content: space-between; padding: 7px 12px 0 6px; height: 27px; align-items: flex-start; }
.colors { display: grid; grid-template: 12px 10px 12px / 12px 10px 12px; padding-left: 6px; }
.colors button { border: 1px solid #ddd; outline: 1px solid #444; }
.fg { grid-area: 1 / 1 / 3 / 3; background: #980010; }
.bg { grid-area: 2 / 2 / 4 / 4; background: #fff; }
.modes { display: flex; flex-direction: column; height: 66px; padding-left: 5px; margin-top: 7px; }
.modes svg { width: 22px; height: 18px; }

.doc { display: flex; flex-direction: column; min-width: 0; }
.tabbar { height: 38px; background: #424242; border-bottom: 2px solid #363636; display: flex; padding-top: 3px; }
.doctab { background: #535353; width: 284px; padding-left: 12px; justify-content: flex-start; gap: 10px; font-family: "Open Sans", "Noto Sans CJK SC", sans-serif; font-size: 15px; }
.view { flex: 1; display: flex; }
.paste { flex: 1; background: #282828; padding: 98px 0 0 95px; display: flex; }
.canvas { flex: 1; position: relative; background: #fff; overflow: hidden; }
.art { position: absolute; margin: 0; white-space: pre; color: #0e0e0e; }
.title, .sub { color: #930415; font-weight: 500; font-family: "Noto Sans", "Noto Sans CJK SC", sans-serif; }
.title b, .sub b { font-weight: 600; }
.title { left: 626px; top: 36px; font-size: 96px; line-height: 120px; }
.sub { left: 70px; top: 217px; font-size: 64px; line-height: 80px; }
.lab { font: 600 33px/40px Lato, sans-serif; top: 326px; }
.pin { left: 97px; }
.goo { left: 323px; }
.sta { left: 540px; top: 328px; }
.pinlogo { left: 136px; top: 394px; width: 70px; height: 70px; }
.glogo { left: 301px; top: 392px; width: 174px; height: 66px; background: #303134; color: #fff; font: 600 48px/55px Lato, sans-serif; text-align: center; padding-right: 6px; }
.frame { left: 180px; top: 322px; width: 550px; height: 60px; }
.tip { left: 604px; top: 286px; width: 87px; height: 42px; border-radius: 6px; border: 1px solid #777; background: #484848; color: #eee; font-size: 13px; line-height: 16px; display: flex; flex-direction: column; justify-content: flex-start; padding: 3px 8px 0; }
.tip span { display: flex; align-items: center; justify-content: space-between; }
.vscroll { width: 19px; background: #4b4b4b; border-right: 2px solid #3c3c3c; display: flex; flex-direction: column; align-items: center; padding: 10px 0; }
.vtrack { flex: 1; width: 14px; padding-top: 262px; }
.vtrack i { display: block; height: 312px; background: #6a6a6a; }
.status { height: 21px; background: #4b4b4b; display: flex; align-items: center; padding: 0 26px 0 3px; }
.status .info { width: 272px; white-space: nowrap; font-size: 13px; }
.status .lf { margin-left: 14px; }
.htrack { flex: 1; padding-left: 415px; }
.htrack i { display: block; width: 472px; height: 14px; background: #6a6a6a; }

.panels, .layers, .dock { display: flex; flex-direction: column; min-width: 0; border-right: 2px solid #3e3e3e; }
.panels { padding-left: 4px; background: #4b4b4b; }
.panels .strip { margin-left: -4px; }
.tabs { height: 35px; background: #434343; display: flex; align-items: stretch; border-bottom: 1px solid #3d3d3d; flex: none; }
.tabs button { width: 48px; color: #a8a8a8; padding-bottom: 3px; }
.tabs .on { background: #535353; color: #f0f0f0; margin-bottom: -1px; }
.tabs .lib { width: 44px; padding-right: 12px; }
.menu { width: 11px; height: 9px; margin: auto 5px auto auto; color: #b8b8b8; }
.libsearch { height: 66px; background: #535353; border-bottom: 2px solid #494949; display: flex; align-items: center; padding: 6px 0 0 16px; gap: 12px; font-size: 15px; }
.libsearch input::placeholder { color: #656565; opacity: 1; }
.cc { height: 293px; display: flex; flex-direction: column; align-items: center; padding: 103px 0 0 2px; }
.cc p { margin: 30px 0 0; font-size: 15px; line-height: 18px; text-align: center; color: #ccc; font-family: "Open Sans", "Noto Sans CJK SC", sans-serif; }
.libfoot { height: 23px; background: #535353; display: flex; align-items: center; justify-content: space-between; padding: 0 24px 2px 18px; }
.second { margin-top: 3px; height: 36px; }
.second .on { width: 76px; }
.presets { flex: 1; padding: 5px 22px 0 0; }
.presets li { height: 30px; background: #535353; border-bottom: 2px solid #494949; display: flex; align-items: center; gap: 9px; padding-left: 10px; font-size: 15px; font-family: "Open Sans", "Noto Sans CJK SC", sans-serif; white-space: nowrap; }
.foot { height: 32px; background: #535353; border-top: 1px solid #404040; display: flex; align-items: center; padding: 0 37px 2px 0; gap: 21px; }
.chk { display: flex; align-items: center; gap: 6px; margin-right: auto; padding-left: 7px; }
.chk input { appearance: none; width: 13px; height: 13px; border-radius: 2px; background: #e6e6e6; display: grid; place-items: center; }
.chk input:checked::after { content: ""; width: 4px; height: 8px; border: solid #333; border-width: 0 2px 2px 0; transform: rotate(40deg); margin-top: -2px; }
.fade { color: #999; }

.dgroup { height: 86px; border-bottom: 2px solid #434343; padding-top: 10px; display: flex; flex-direction: column; align-items: center; background: repeating-linear-gradient(90deg, #464646 0 1px, #535353 1px 2px) 10px 4px / 26px 3px no-repeat; }
.dgroup button { height: 36px; width: 40px; color: #dcdcdc; }
.one { height: 51px; }
.char { font: 23px/24px "Open Sans", sans-serif; }
.char i { width: 1px; height: 20px; background: #ddd; margin-left: 1px; }
.para { font: 25px/24px "Open Sans", sans-serif; }

.layers { border-right: 0; border-left: 3px solid #444; }
.layers .tabs { padding-left: 2px; }
.layers .tabs .on { width: 45px; margin-right: 3px; }
.layers .tabs button { width: 49px; }
.layers .tabs .menu { margin-right: 6px; }
.filter { height: 41px; display: flex; align-items: center; padding: 5px 0 0 4px; border-bottom: 2px solid #474747; color: #999; }
.ftype { width: 104px; height: 26px; background: #4b4b4b; display: flex; align-items: center; gap: 7px; padding-left: 9px; }
.ftype input { width: 60px; }
.ficons { display: flex; gap: 14px; align-items: center; color: #999; margin-left: 23px; }
.ficons svg, .ficons .T { width: 16px; height: 16px; }
.ficons .T { font-size: 17px; line-height: 16px; color: #999; }
.dot { width: 12px; height: 12px; border-radius: 6px; background: #a0a0a0; margin: 0 0 12px 20px; }
.blend { height: 36px; display: flex; align-items: center; padding-left: 4px; border-bottom: 2px solid #474747; }
.blend .drop { width: 144px; font-size: 15px; }
.blend label { width: 82px; text-align: right; padding-right: 9px; color: #8c8c8c; white-space: nowrap; }
.num { width: 64px; height: 21px; }
.num input { padding-left: 1px; }
.num button { width: 17px; }
.num.off input { color: #777; }
.locks { border-bottom: 0; height: 39px; padding-bottom: 3px; }
.lk { color: #8c8c8c; padding-left: 3px; width: 45px; }
.locks .ficons { margin-left: 4px; gap: 11px; }
.locks label { width: 53px; }
.listwrap { flex: 1; background: #4a4a4a; padding: 0 21px 0 4px; }
.list { font-size: 15px; font-family: "Open Sans", "Noto Sans CJK SC", sans-serif; }
.list li { height: 51px; display: flex; background: #535353; }
.list .grp { height: 31px; }
.list li + li { border-top: 1px solid #4c4c4c; }
.eye { width: 16px; height: 11px; margin: auto 10px auto 6px; color: #dedede; }
.row { flex: 1; display: flex; align-items: center; border-left: 1px solid #4a4a4a; white-space: nowrap; }
.sel { background: #6a6a6a; padding-left: 22px; gap: 11px; }
.brk { display: grid; width: 46px; height: 46px; place-items: center; }
.brk > * { grid-area: 1 / 1; }
.brk > svg { width: 46px; height: 46px; }
.grp .row { padding: 0 0 2px 6px; }
.folder { width: 18px; height: 14px; margin: 0 15px 0 4px; }
.pix { padding-left: 25px; gap: 12px; }
.thumb { width: 32px; height: 40px; }
.white { background: #fff; border: 1px solid #2c2c2c; }
.txt { padding-left: 36px; gap: 23px; }
.root { padding-left: 16px; }
.base { padding-left: 5px; }
.lck { width: 13px; height: 16px; margin: 0 20px 0 auto; }
.foot.lay { gap: 16px; justify-content: flex-end; padding-right: 34px; color: #999; }
.lay button, .lay svg { width: 18px; height: 16px; }
.fx { font: italic 17px/16px "Liberation Serif", serif; }

.taskbar { height: 15px; border-top: 2px solid #3c434c; background: linear-gradient(90deg, #20242a 0 15%, #15205a 26%, #14205c 35%, #171a66 52%, #171a60 68%, #1c222c 78%); display: flex; align-items: flex-end; padding-left: 796px; overflow: hidden; }
.taskbar i { width: 256px; height: 4px; border-radius: 5px 5px 0 0; background: #403c80; border-top: 1px solid #7078a8; }
.mark { position: absolute; left: 10px; bottom: 12px; display: flex; align-items: center; gap: 10px; opacity: 0.4; color: #aaa; filter: blur(1px); font: 700 50px/54px "Open Sans", sans-serif; pointer-events: none; }
.mark span { padding-bottom: 6px; }
```
